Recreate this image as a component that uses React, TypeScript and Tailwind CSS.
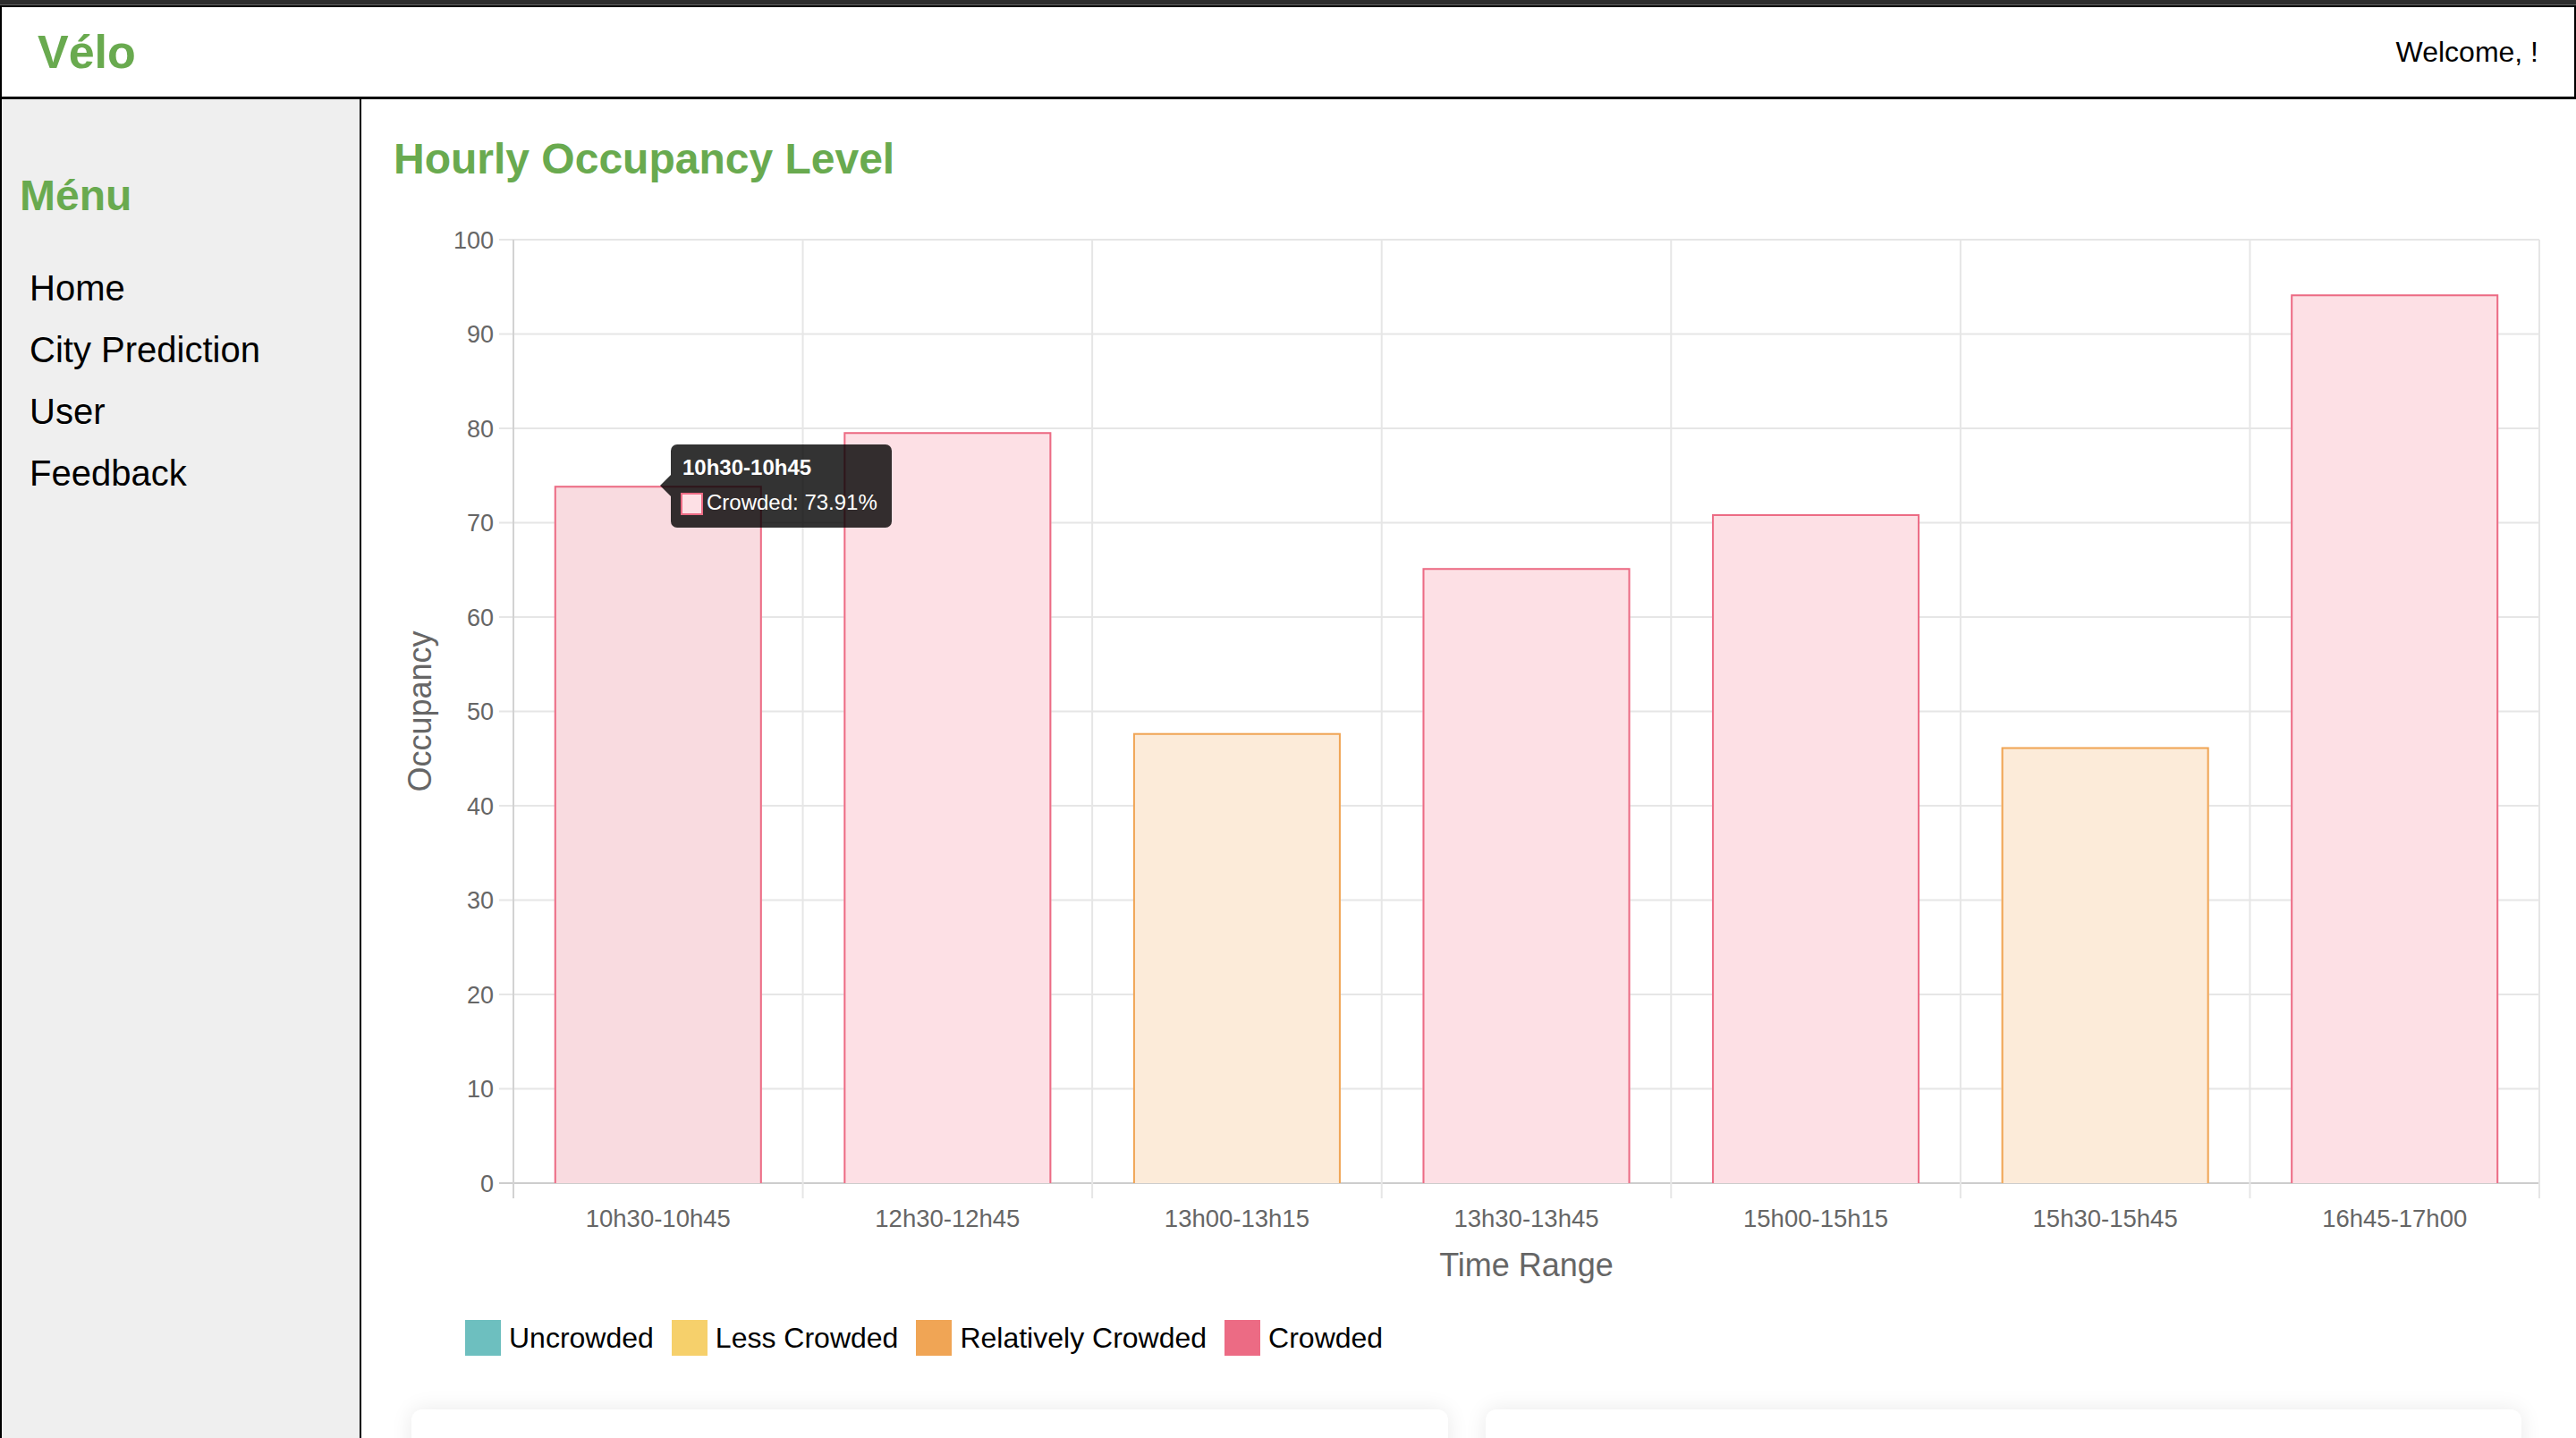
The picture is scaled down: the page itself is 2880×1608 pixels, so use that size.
import React from "react";

const FONT = "'Liberation Sans', Arial, Helvetica, sans-serif";

const labels = [
  "10h30-10h45",
  "12h30-12h45",
  "13h00-13h15",
  "13h30-13h45",
  "15h00-15h15",
  "15h30-15h45",
  "16h45-17h00",
];
const values = [73.91, 79.6, 47.7, 65.2, 70.9, 46.2, 94.2];

const PINK = { fill: "#fde0e5", stroke: "#ec6b84" };
const ORANGE = { fill: "#fcebd9", stroke: "#f0a555" };

function Chart() {
  const plotL = 574;
  const plotR = 2839;
  const plotT = 268;
  const plotB = 1323;
  const cw = (plotR - plotL) / 7;
  const bw = 232;
  const y = (v: number) => plotB - (v / 100) * (plotB - plotT);
  const ticks = [0, 10, 20, 30, 40, 50, 60, 70, 80, 90, 100];

  return (
    <svg width={2404} height={1245} className="block" fontFamily={FONT}>
      <g transform="translate(-440 -205)">
        {ticks.map((t) => (
          <line
            key={"h" + t}
            x1={558}
            x2={plotR}
            y1={y(t)}
            y2={y(t)}
            stroke={t === 0 ? "#cdcdcd" : "#e6e6e6"}
            strokeWidth={2}
          />
        ))}
        {Array.from({ length: 8 }).map((_, i) => (
          <line
            key={"v" + i}
            x1={plotL + i * cw}
            x2={plotL + i * cw}
            y1={plotT}
            y2={1340}
            stroke={i === 0 ? "#d2d2d2" : "#e6e6e6"}
            strokeWidth={2}
          />
        ))}
        {ticks.map((t) => (
          <text
            key={"yl" + t}
            x={552}
            y={y(t) + 9.5}
            textAnchor="end"
            fontSize={27}
            fill="#666666"
          >
            {t}
          </text>
        ))}
        {values.map((v, i) => {
          const c = v < 60 ? ORANGE : PINK;
          const x0 = plotL + i * cw + (cw - bw) / 2;
          const top = y(v);
          return (
            <g key={"b" + i}>
              <rect
                x={x0}
                y={top}
                width={bw}
                height={plotB - top}
                fill={i === 0 ? "#f9dbe0" : c.fill}
              />
              <path
                d={`M${x0 + 1} ${plotB} L${x0 + 1} ${top + 1} L${x0 + bw - 1} ${top + 1} L${x0 + bw - 1} ${plotB}`}
                fill="none"
                stroke={c.stroke}
                strokeWidth={2}
              />
            </g>
          );
        })}
        {labels.map((l, i) => (
          <text
            key={"xl" + i}
            x={plotL + i * cw + cw / 2}
            y={1372}
            textAnchor="middle"
            fontSize={27.5}
            fill="#666666"
          >
            {l}
          </text>
        ))}
        <text
          x={(plotL + plotR) / 2}
          y={1427}
          textAnchor="middle"
          fontSize={36}
          fill="#666666"
        >
          Time Range
        </text>
        <text
          x={0}
          y={0}
          transform={`translate(482 ${(plotT + plotB) / 2}) rotate(-90)`}
          textAnchor="middle"
          fontSize={36}
          fill="#666666"
        >
          Occupancy
        </text>
        <g>
          <path d="M738 543 L750 531 L750 555 Z" fill="rgba(0,0,0,0.8)" />
          <rect x={750} y={497} width={247} height={93} rx={7} fill="rgba(0,0,0,0.8)" />
          <text x={763} y={531} fontSize={24} fontWeight={700} fill="#ffffff">
            10h30-10h45
          </text>
          <rect x={761} y={551} width={25} height={25} fill="#ffffff" />
          <rect x={762} y={552} width={23} height={23} fill="#fde0e5" stroke="#ec6b84" strokeWidth={2} />
          <text x={790} y={570} fontSize={24} fill="#ffffff">
            Crowded: 73.91%
          </text>
        </g>
      </g>
    </svg>
  );
}

const legend = [
  { label: "Uncrowded", color: "bg-[#6dbfbf]" },
  { label: "Less Crowded", color: "bg-[#f6d06b]" },
  { label: "Relatively Crowded", color: "bg-[#f0a555]" },
  { label: "Crowded", color: "bg-[#ec6b84]" },
];

export default function App() {
  return (
    <div
      className="w-[2880px] h-[1608px] overflow-hidden flex flex-col bg-white text-black"
      style={{ fontFamily: FONT }}
    >
      <div className="h-[5px] bg-[#2e2e2e]" />
      <div className="h-[1px] bg-[#666666]" />
      <header className="h-[105px] shrink-0 border-t-2 border-x-2 border-b-[3px] border-black bg-white flex items-center justify-between pl-[40px] pr-[40px]">
        <div className="text-[52px] leading-[60px] font-bold text-[#69aa4f]">Vélo</div>
        <div className="text-[32px] leading-[40px]">Welcome, !</div>
      </header>
      <div className="flex flex-1 min-h-0">
        <aside className="w-[404px] shrink-0 bg-[#efefef] border-l-2 border-r-2 border-black pt-[81px]">
          <h2 className="pl-[20px] text-[48px] leading-[54px] font-bold text-[#69aa4f]">Ménu</h2>
          <ul className="mt-[42px] pl-[31px]">
            {["Home", "City Prediction", "User", "Feedback"].map((t) => (
              <li key={t} className="text-[40px] leading-[69px]">
                {t}
              </li>
            ))}
          </ul>
        </aside>
        <main className="flex-1 min-w-0 pt-[40px] pl-[36px]">
          <h1 className="text-[48px] leading-[54px] font-bold text-[#69aa4f]">
            Hourly Occupancy Level
          </h1>
          <Chart />
          <div className="mt-[26px] ml-[80px] flex items-center gap-[20px]">
            {legend.map((l) => (
              <div key={l.label} className="flex items-center gap-[9px]">
                <div className={`w-[40px] h-[40px] ${l.color}`} />
                <span className="text-[32px] leading-[40px]">{l.label}</span>
              </div>
            ))}
          </div>
          <div className="mt-[60px] ml-[20px] w-[2359px] grid grid-cols-2 gap-[42px]">
            <div className="h-[240px] rounded-[12px] bg-white shadow-[0_0_24px_rgba(0,0,0,0.09)]" />
            <div className="h-[240px] rounded-[12px] bg-white shadow-[0_0_24px_rgba(0,0,0,0.09)]" />
          </div>
        </main>
      </div>
    </div>
  );
}
